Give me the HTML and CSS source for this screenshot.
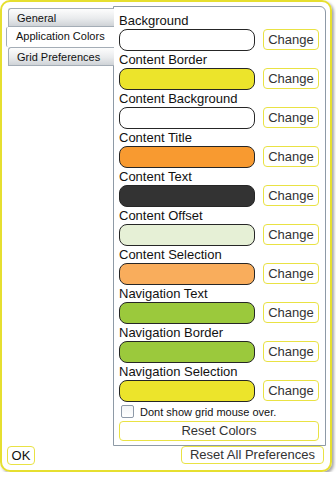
FILE: index.html
```
<!DOCTYPE html>
<html>
<head>
<meta charset="utf-8">
<link rel="stylesheet" href="styles.css">
</head>
<body>
<div class="dialog">
  <div class="main">
    <div class="tabs">
      <div class="tab">General</div>
      <div class="tab active">Application Colors</div>
      <div class="tab">Grid Preferences</div>
    </div>
    <div class="panel">
      <div class="label">Background</div>
      <div class="row"><div class="swatch" style="background:#ffffff"></div><div class="btn change">Change</div></div>
      <div class="label">Content Border</div>
      <div class="row"><div class="swatch" style="background:#ece42b"></div><div class="btn change">Change</div></div>
      <div class="label">Content Background</div>
      <div class="row"><div class="swatch" style="background:#ffffff"></div><div class="btn change">Change</div></div>
      <div class="label">Content Title</div>
      <div class="row"><div class="swatch" style="background:#f89a30"></div><div class="btn change">Change</div></div>
      <div class="label">Content Text</div>
      <div class="row"><div class="swatch" style="background:#333333"></div><div class="btn change">Change</div></div>
      <div class="label">Content Offset</div>
      <div class="row"><div class="swatch" style="background:#e6f0d6"></div><div class="btn change">Change</div></div>
      <div class="label">Content Selection</div>
      <div class="row"><div class="swatch" style="background:#f9ad5c"></div><div class="btn change">Change</div></div>
      <div class="label">Navigation Text</div>
      <div class="row"><div class="swatch" style="background:#9bc93c"></div><div class="btn change">Change</div></div>
      <div class="label">Navigation Border</div>
      <div class="row"><div class="swatch" style="background:#9bc93c"></div><div class="btn change">Change</div></div>
      <div class="label">Navigation Selection</div>
      <div class="row"><div class="swatch" style="background:#ece42b"></div><div class="btn change">Change</div></div>
      <div class="check-row"><div class="checkbox"></div><span>Dont show grid mouse over.</span></div>
      <div class="btn reset">Reset Colors</div>
    </div>
  </div>
  <div class="footer">
    <div class="btn ok">OK</div>
    <div class="btn reset-all">Reset All Preferences</div>
  </div>
</div>
</body>
</html>
```
FILE: styles.css
```
html, body {
  margin: 0;
  padding: 0;
  background: #ffffff;
}
body {
  font-family: "Liberation Sans", Arial, sans-serif;
  color: #111;
}
.dialog {
  box-sizing: border-box;
  width: 332px;
  height: 472px;
  border: 2px solid #e6df30;
  border-radius: 10px;
  box-shadow: 2px 2px 3px rgba(0, 0, 0, 0.35);
  padding: 4px 4px 0 4px;
  display: flex;
  flex-direction: column;
}
.main {
  display: flex;
  align-items: flex-start;
}
.tabs {
  width: 108px;
  margin-top: 2px;
  margin-right: -1px;
  position: relative;
  z-index: 1;
  display: flex;
  flex-direction: column;
}
.tab {
  box-sizing: border-box;
  height: 19px;
  margin-left: 2px;
  padding-left: 8px;
  font-size: 11px;
  line-height: 18px;
  color: #111;
  border: 1px solid #a4adb6;
  border-right: none;
  border-radius: 3px 0 0 0;
  background: linear-gradient(#fdfdfd, #e9ebed 55%, #cfd3d7);
}
.tab.active {
  height: 20px;
  margin-left: 0;
  padding-left: 9px;
  background: #ffffff;
  border-color: #a4adb6;
  border-radius: 2px 0 0 2px;
  border-top: none;
  border-bottom: none;
}
.panel {
  box-sizing: border-box;
  width: 213px;
  height: 440px;
  border: 1px solid #8e9aa6;
  border-radius: 0 6px 0 0;
  padding: 5px 6px 0 5px;
  background: #fff;
}
.label {
  font-size: 13px;
  line-height: 17px;
  height: 17px;
  color: #111;
  white-space: nowrap;
}
.row {
  display: flex;
  align-items: flex-start;
  height: 22px;
}
.swatch {
  box-sizing: border-box;
  width: 136px;
  height: 22px;
  border: 1px solid #262626;
  border-radius: 8px;
}
.btn {
  box-sizing: border-box;
  border: 1px solid #e9e244;
  border-radius: 4px;
  background: #fff;
  color: #333;
  font-size: 13px;
  text-align: center;
  white-space: nowrap;
}
.change {
  width: 56px;
  height: 21px;
  line-height: 19px;
  margin-left: 8px;
}
.check-row {
  display: flex;
  align-items: center;
  height: 19px;
  font-size: 11px;
  color: #111;
}
.checkbox {
  box-sizing: border-box;
  width: 13px;
  height: 13px;
  margin-left: 2px;
  margin-right: 6px;
  border: 1px solid #8d99a8;
  border-radius: 2px;
  background: linear-gradient(#f2f4f6, #ffffff);
}
.reset {
  width: 200px;
  height: 20px;
  line-height: 18px;
}
.footer {
  display: flex;
  justify-content: space-between;
  align-items: flex-start;
  padding: 0 2px 0 1px;
}
.ok {
  width: 28px;
  height: 19px;
  line-height: 17px;
  color: #111;
}
.reset-all {
  width: 143px;
  height: 18px;
  line-height: 16px;
}
```
